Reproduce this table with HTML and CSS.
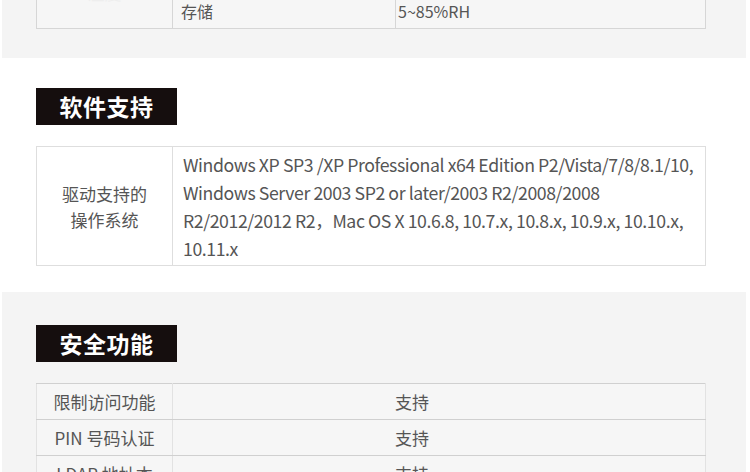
FILE: index.html
```html
<!DOCTYPE html>
<html lang="zh-CN">
<head>
<meta charset="utf-8">
<link rel="stylesheet" href="styles.css">
</head>
<body>
<section class="panel panel-top">
  <table class="spec spec-top">
    <tr><td class="label" rowspan="2">湿度</td><td class="sub">工作</td><td class="val">20~80%RH</td></tr>
    <tr><td class="sub">存储</td><td class="val">5~85%RH</td></tr>
  </table>
</section>
<section class="panel panel-white">
  <h2 class="heading">软件支持</h2>
  <table class="spec spec-soft">
    <tr>
      <td class="label">驱动支持的<br>操作系统</td>
      <td class="text">Windows XP SP3 /XP Professional x64 Edition P2/Vista/7/8/8.1/10,<br>Windows Server 2003 SP2 or later/2003 R2/2008/2008<br>R2/2012/2012 R2，Mac OS X 10.6.8, 10.7.x, 10.8.x, 10.9.x, 10.10.x,<br>10.11.x</td>
    </tr>
  </table>
</section>
<section class="panel panel-sec">
  <h2 class="heading">安全功能</h2>
  <table class="spec spec-sec">
    <tr><td class="label">限制访问功能</td><td class="center">支持</td></tr>
    <tr><td class="label">PIN 号码认证</td><td class="center">支持</td></tr>
    <tr><td class="label">LDAP 地址本</td><td class="center">支持</td></tr>
  </table>
</section>
</body>
</html>
```
FILE: styles.css
```css
html, body {
  margin: 0;
  padding: 0;
  background: #ffffff;
  font-family: "Noto Sans CJK SC", "Noto Sans", sans-serif;
  color: #555555;
}
.panel {
  margin: 0 4px 0 2px;
  overflow: hidden;
  box-sizing: border-box;
  padding: 0 40px 0 34px;
}
.panel-top {
  background: #f4f4f4;
  height: 58px;
}
.panel-white {
  background: #ffffff;
  height: 234px;
  padding-top: 30px;
}
.panel-sec {
  background: #f4f4f4;
  height: 180px;
  padding-top: 33px;
}
.heading {
  margin: 0;
  width: 141px;
  height: 37px;
  background: #150e0e;
  color: #ffffff;
  font-size: 23px;
  font-weight: bold;
  line-height: 37px;
  text-align: center;
  letter-spacing: 0.5px;
}
.spec {
  width: 670px;
  border-collapse: collapse;
  table-layout: fixed;
}
.spec td {
  border: 1px solid #dcdcdc;
  padding: 0;
}
.spec .label {
  width: 135px;
  text-align: center;
  font-size: 17px;
}
.spec-top {
  margin-top: -44px;
}
.spec-top td {
  height: 35px;
  background: #f6f6f6;
  font-size: 16px;
  border-color: #d6d6d6;
}
.spec-top .label {
  color: #eeeeee;
}
.spec-top .sub {
  width: 214px;
  padding-left: 8px;
}
.spec-top .val {
  padding-left: 2px;
}
.spec-soft {
  margin-top: 21px;
}
.spec-soft td {
  background: #ffffff;
  border-color: #dedede;
}
.spec-soft .label {
  line-height: 26px;
  padding-top: 2px;
}
.spec-soft .text {
  padding: 3px 0 3px 10px;
  font-size: 17.7px;
  line-height: 28px;
  letter-spacing: -0.42px;
  white-space: nowrap;
}
.spec-sec {
  margin-top: 21px;
}
.spec-sec td {
  height: 35px;
  background: #f6f6f6;
  border-color: #d0d0d0;
  border-left-color: #e2e2e2;
  border-right-color: #e2e2e2;
}
.spec-sec .center {
  text-align: center;
  font-size: 17px;
  padding-right: 54px;
}
```
